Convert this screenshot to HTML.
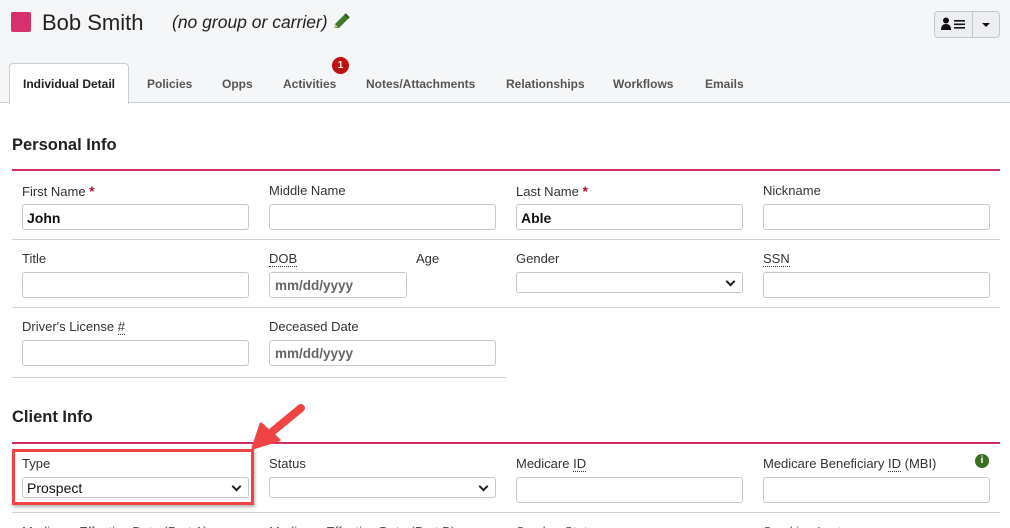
<!DOCTYPE html>
<html><head><meta charset="utf-8"><style>
*{box-sizing:border-box;margin:0;padding:0}
html,body{width:1010px;height:528px;overflow:hidden}
body{background:#fff;font-family:"Liberation Sans",sans-serif;color:#222;position:relative}
.a{position:absolute}
.hdr{left:0;top:0;width:1010px;height:103px;background:#f5f6f8;border-bottom:1px solid #c9ccd1}
.tab{top:77px;font-size:12px;color:#555;font-weight:bold}
.lbl{font-size:13px;color:#333}
.in{border:1px solid #c4c7cc;border-radius:3px;background:#fff;height:26px}
.sep{height:1px;background:#d0d3d7}
.pink{height:2px;background:#cf2c68;left:12px;width:988px}
.h2{font-size:16.5px;font-weight:bold;color:#222;left:12px}
.ph{font-size:13.5px;font-weight:bold;color:#666;padding:5px 0 0 5px}
.star{color:#b0102a;font-size:14px;font-weight:bold}
.dot{border-bottom:1px dotted #333}
.sel{border:1px solid #c4c7cc;border-radius:3px;background:#fff;height:21px}
.sel:after{content:"";position:absolute;right:8px;top:5px;width:5px;height:5px;border-right:2px solid #222;border-bottom:2px solid #222;transform:rotate(45deg)}
</style></head><body>
<div class="a hdr"></div>
<div class="a" style="left:11px;top:12px;width:20px;height:20px;background:#d6306e;border-radius:2px"></div>
<div class="a" style="left:42px;top:10px;font-size:22px;color:#222">Bob Smith</div>
<div class="a" style="left:172px;top:12px;font-size:17.5px;font-style:italic;color:#222">(no group or carrier)</div>
<svg class="a" style="left:330px;top:11px" width="22" height="22" viewBox="0 0 22 22"><path d="M4 17 L5 13 L15 3 L19 7 L9 17 Z" fill="#3d7a2a"/><path d="M15 3 L19 7" stroke="#2c5a1e" stroke-width="2"/><path d="M4 17 L5 13 L8 16Z" fill="#d8c890"/></svg>
<div class="a" style="left:934px;top:11px;width:66px;height:27px;border:1px solid #c4c7cc;border-radius:4px;background:#eceef1"></div>
<div class="a" style="left:972px;top:12px;width:1px;height:25px;background:#c4c7cc"></div>
<svg class="a" style="left:941px;top:17px" width="26" height="14" viewBox="0 0 26 14"><circle cx="5" cy="3.5" r="3" fill="#111"/><path d="M0 13 Q0 7 5 7 Q10 7 10 13Z" fill="#111"/><rect x="13" y="3" width="11" height="1.6" fill="#111"/><rect x="13" y="6.5" width="11" height="1.6" fill="#111"/><rect x="13" y="10" width="11" height="1.6" fill="#111"/></svg>
<div class="a" style="left:982px;top:23px;border-left:4px solid transparent;border-right:4px solid transparent;border-top:4px solid #111"></div>
<div class="a" style="left:9px;top:63px;width:120px;height:41px;background:#fff;border:1px solid #c9ccd1;border-bottom:none;border-radius:4px 4px 0 0"></div>
<div class="a tab" style="left:23px;color:#222">Individual Detail</div>
<div class="a tab" style="left:147px">Policies</div>
<div class="a tab" style="left:222px">Opps</div>
<div class="a tab" style="left:283px">Activities</div>
<div class="a" style="left:332px;top:57px;width:17px;height:17px;border-radius:50%;background:#c01010;color:#fff;font-size:10px;font-weight:bold;text-align:center;line-height:17px">1</div>
<div class="a tab" style="left:366px">Notes/Attachments</div>
<div class="a tab" style="left:506px">Relationships</div>
<div class="a tab" style="left:613px">Workflows</div>
<div class="a tab" style="left:705px">Emails</div>

<div class="a h2" style="top:136px">Personal Info</div>
<div class="a pink" style="top:169px"></div>
<div class="a lbl" style="left:22px;top:183px">First Name <span class="star">*</span></div>
<div class="a lbl" style="left:269px;top:183px">Middle Name</div>
<div class="a lbl" style="left:516px;top:183px">Last Name <span class="star">*</span></div>
<div class="a lbl" style="left:763px;top:183px">Nickname</div>
<div class="a in" style="left:22px;top:204px;width:227px"><div style="font-size:14px;font-weight:bold;padding:5px 0 0 4px;color:#111">John</div></div>
<div class="a in" style="left:269px;top:204px;width:227px"></div>
<div class="a in" style="left:516px;top:204px;width:227px"><div style="font-size:14px;font-weight:bold;padding:5px 0 0 4px;color:#111">Able</div></div>
<div class="a in" style="left:763px;top:204px;width:227px"></div>
<div class="a sep" style="left:12px;top:239px;width:988px"></div>
<div class="a lbl" style="left:22px;top:251px">Title</div>
<div class="a lbl" style="left:269px;top:251px"><span class="dot">DOB</span></div>
<div class="a lbl" style="left:416px;top:251px">Age</div>
<div class="a lbl" style="left:516px;top:251px">Gender</div>
<div class="a lbl" style="left:763px;top:251px"><span class="dot">SSN</span></div>
<div class="a in" style="left:22px;top:272px;width:227px"></div>
<div class="a in ph" style="left:269px;top:272px;width:138px">mm/dd/yyyy</div>
<div class="a sel" style="left:516px;top:272px;width:227px"></div>
<div class="a in" style="left:763px;top:272px;width:227px"></div>
<div class="a sep" style="left:12px;top:307px;width:988px"></div>
<div class="a lbl" style="left:22px;top:319px">Driver's License <span class="dot">#</span></div>
<div class="a lbl" style="left:269px;top:319px">Deceased Date</div>
<div class="a in" style="left:22px;top:340px;width:227px"></div>
<div class="a in ph" style="left:269px;top:340px;width:227px">mm/dd/yyyy</div>
<div class="a sep" style="left:12px;top:377px;width:494px"></div>

<div class="a h2" style="top:408px">Client Info</div>
<div class="a pink" style="top:442px"></div>
<div class="a lbl" style="left:22px;top:456px">Type</div>
<div class="a lbl" style="left:269px;top:456px">Status</div>
<div class="a lbl" style="left:516px;top:456px">Medicare <span class="dot">ID</span></div>
<div class="a lbl" style="left:763px;top:456px">Medicare Beneficiary <span class="dot">ID</span> (MBI)</div>
<div class="a" style="left:975px;top:454px;width:14px;height:14px;border-radius:50%;background:#3b6e22;color:#fff;font-size:10px;font-weight:bold;text-align:center;line-height:14px">i</div>
<div class="a sel" style="left:22px;top:477px;width:227px"><div style="font-size:14px;padding:2px 0 0 4px;color:#111">Prospect</div></div>
<div class="a sel" style="left:269px;top:477px;width:227px"></div>
<div class="a in" style="left:516px;top:477px;width:227px"></div>
<div class="a in" style="left:763px;top:477px;width:227px"></div>
<div class="a sep" style="left:12px;top:512px;width:988px"></div>
<div class="a lbl" style="left:22px;top:524px;color:#555">Medicare Effective Date (Part A)</div>
<div class="a lbl" style="left:269px;top:524px;color:#555">Medicare Effective Date (Part B)</div>
<div class="a lbl" style="left:516px;top:524px;color:#555">Smoker Status</div>
<div class="a lbl" style="left:763px;top:524px;color:#555">Smoking Last</div>

<div class="a" style="left:12px;top:449px;width:242px;height:56px;border:3px solid #f04444;box-shadow:1px 2px 3px rgba(0,0,0,.3)"></div>
<svg class="a" style="left:245px;top:400px" width="65" height="55" viewBox="0 0 65 55"><path d="M56 8 L22 36" stroke="#f04444" stroke-width="8" stroke-linecap="round"/><path d="M8 48 L16 24 L34 40 Z" fill="#f04444" stroke="#f04444" stroke-width="3" stroke-linejoin="round"/></svg>
</body></html>
